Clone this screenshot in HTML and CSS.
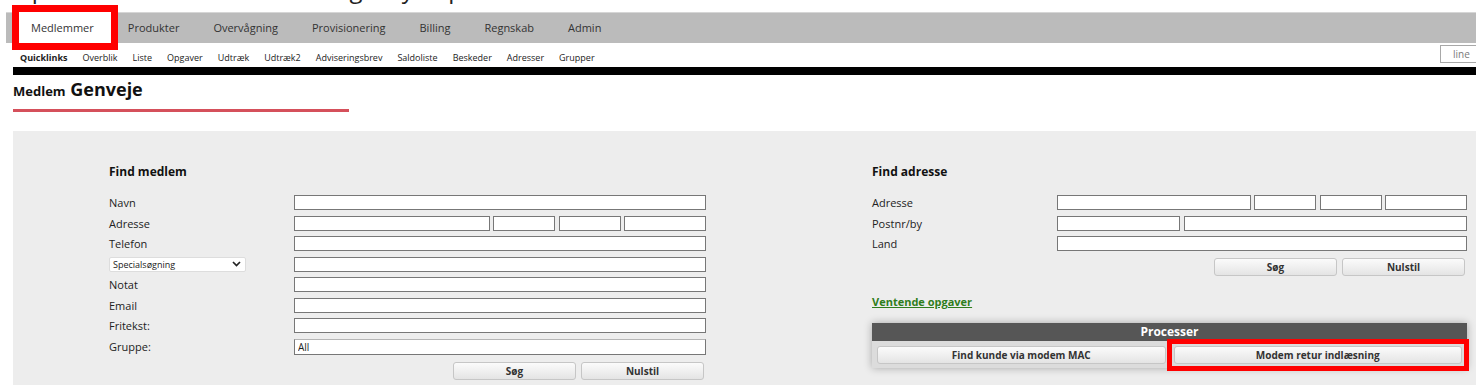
FILE: index.html
```html
<!DOCTYPE html>
<html lang="da">
<head>
    <meta charset="UTF-8">
    <meta name="viewport" content="width=device-width, initial-scale=1.0">
    <link rel="stylesheet" href="styles.css">
    <title>Medlem Genveje</title>
</head>
<body>
    <div class="doc-title">
        <h1>Opret modem retur indlæsning – ny import</h1>
    </div>

    <nav class="mainnav">
        <a class="active" href="#">Medlemmer</a>
        <a href="#">Produkter</a>
        <a href="#">Overvågning</a>
        <a href="#">Provisionering</a>
        <a href="#">Billing</a>
        <a href="#">Regnskab</a>
        <a href="#">Admin</a>
    </nav>

    <div class="subnav">
        <a href="#"><b>Quicklinks</b></a>
        <a href="#">Overblik</a>
        <a href="#">Liste</a>
        <a href="#">Opgaver</a>
        <a href="#">Udtræk</a>
        <a href="#">Udtræk2</a>
        <a href="#">Adviseringsbrev</a>
        <a href="#">Saldoliste</a>
        <a href="#">Beskeder</a>
        <a href="#">Adresser</a>
        <a href="#">Grupper</a>
        <span class="line-toggle">line</span>
    </div>
    <div class="blackbar"></div>

    <h2 class="pagehead"><small>Medlem</small> Genveje</h2>

    <div class="panel">
        <!-- venstre kolonne: find medlem -->
        <div class="col col-left">
            <h3>Find medlem</h3>
            <div class="fields">
                <label>Navn</label>
                <input class="txt" type="text">

                <label>Adresse</label>
                <div class="split">
                    <input class="txt" type="text">
                    <input class="txt short" type="text">
                    <input class="txt short" type="text">
                    <input class="txt medium" type="text">
                </div>

                <label>Telefon</label>
                <input class="txt" type="text">

                <div class="special">
                    <span>Specialsøgning</span>
                    <svg width="9" height="6" viewBox="0 0 9 6"><path d="M1 1 L4.5 4.5 L8 1" fill="none" stroke="#222" stroke-width="1.7"/></svg>
                </div>
                <input class="txt" type="text">

                <label>Notat</label>
                <input class="txt" type="text">

                <label>Email</label>
                <input class="txt" type="text">

                <label>Fritekst:</label>
                <input class="txt" type="text">

                <label>Gruppe:</label>
                <input class="txt group" type="text" value="All">
            </div>
            <div class="actions actions-left">
                <button class="btn">Søg</button>
                <button class="btn">Nulstil</button>
            </div>
        </div>

        <!-- højre kolonne: find adresse + processer -->
        <div class="col col-right">
            <h3>Find adresse</h3>
            <div class="fields">
                <label>Adresse</label>
                <div class="split">
                    <input class="txt" type="text">
                    <input class="txt short" type="text">
                    <input class="txt short" type="text">
                    <input class="txt medium" type="text">
                </div>

                <label>Postnr/by</label>
                <div class="split">
                    <input class="txt zip" type="text">
                    <input class="txt" type="text">
                </div>

                <label>Land</label>
                <input class="txt" type="text">
            </div>
            <div class="actions">
                <button class="btn">Søg</button>
                <button class="btn">Nulstil</button>
            </div>

            <div class="pending"><a href="#">Ventende opgaver</a></div>

            <div class="processes">
                <h4>Processer</h4>
                <div class="process-row">
                    <div class="process-cell"><button class="btn">Find kunde via modem MAC</button></div>
                    <div class="process-cell flagged"><button class="btn">Modem retur indlæsning</button></div>
                </div>
            </div>
        </div>
    </div>
</body>
</html>
```

FILE: styles.css
```css
body {
    margin: 0;
    font-family: "Open Sans", "Liberation Sans", Arial, sans-serif;
    color: #222;
    background-color: #fff;
    overflow: hidden;
}
a {
    color: #222;
    text-decoration: none;
}

/* afskåret overskrift i toppen */
.doc-title {
    height: 12px;
    overflow: hidden;
    padding-left: 13px;
}
.doc-title h1 {
    margin: -23px 0 0;
    font-size: 24px;
    font-weight: normal;
    line-height: 24px;
    white-space: nowrap;
}

/* hovedmenu */
.mainnav {
    display: flex;
    height: 31px;
    margin-left: 6px;
    padding-left: 13px;
    background: linear-gradient(#d6d6d6 0, #d6d6d6 1px, #bbb 1px);
}
.mainnav a {
    padding: 0 17px;
    font-size: 11px;
    line-height: 31px;
    color: #333;
}
.mainnav a.active {
    background-color: #fff;
    padding-left: 12px;
    outline: 7px solid #f00;
}

/* undermenu */
.subnav {
    display: flex;
    align-items: flex-end;
    gap: 15px;
    height: 24px;
    box-sizing: border-box;
    padding: 0 0 3px 20px;
    font-size: 9px;
    line-height: 12px;
    overflow: hidden;
}
.line-toggle {
    align-self: flex-start;
    margin: 2px -8px 0 auto;
    width: 44px;
    height: 18px;
    box-sizing: border-box;
    border: 1px solid #a8a8a8;
    padding-left: 12px;
    font-size: 10px;
    line-height: 16px;
    color: #7a7a7a;
}
.blackbar {
    height: 8px;
    margin-left: 13px;
    background-color: #000;
}

/* sidetitel */
.pagehead {
    width: 336px;
    margin: 0 0 19px 13px;
    padding: 2px 0 6px;
    border-bottom: 3px solid #d5505b;
    font-size: 18px;
    line-height: 24px;
    font-weight: bold;
    color: #111;
}
.pagehead small {
    font-size: 13px;
}

/* grå søgeflade */
.panel {
    display: flex;
    gap: 166px;
    margin-left: 13px;
    padding: 33px 9px 60px 96px;
    background-color: #ededed;
}
.col-left {
    width: 597px;
}
.col-right {
    width: 595px;
}
.col h3 {
    margin: 0 0 15px;
    font-size: 12px;
    line-height: 16px;
    color: #111;
}
.fields {
    display: grid;
    grid-template-columns: 185px 1fr;
    grid-auto-rows: 15px;
    row-gap: 5.5px;
}
.fields label {
    font-size: 11px;
    line-height: 15px;
}
.txt {
    display: block;
    width: 100%;
    height: 15px;
    margin: 0;
    box-sizing: border-box;
    padding: 0 3px;
    border: 1px solid #777;
    background-color: #fff;
    font-family: inherit;
    font-size: 10px;
    color: #222;
}
.txt.group {
    height: 16px;
    border-top-color: #b5b5b5;
}
.split {
    display: flex;
    gap: 3.5px;
}
.split .txt {
    flex: 1;
}
.split .short {
    flex: none;
    width: 62px;
}
.split .medium {
    flex: none;
    width: 82px;
}
.split .zip {
    flex: none;
    width: 123px;
}
.special {
    display: flex;
    align-items: center;
    justify-content: space-between;
    width: 137px;
    height: 15px;
    box-sizing: border-box;
    padding: 0 4px 0 3px;
    border: 1px solid #ddd;
    border-radius: 2px;
    background-color: #fff;
    font-size: 9px;
}

.actions {
    display: flex;
    justify-content: flex-end;
    gap: 5px;
    margin-top: 7px;
    padding-right: 2px;
}
.actions-left {
    margin-top: 8px;
}
.btn {
    width: 123px;
    height: 18px;
    padding: 0;
    border: 1px solid #c6c6c6;
    border-radius: 3px;
    background: linear-gradient(#fbfbfb, #e4e4e4);
    font-family: inherit;
    font-size: 10px;
    font-weight: bold;
    color: #333;
}

.pending {
    margin-top: 18px;
    font-size: 11px;
    line-height: 15px;
    font-weight: bold;
}
.pending a {
    color: #2f7d1c;
    text-decoration: underline;
}

/* processer-boks */
.processes {
    margin-top: 14px;
    background-color: #dcdcdc;
    box-shadow: 0 0 8px rgba(0, 0, 0, 0.3);
}
.processes h4 {
    margin: 0;
    background-color: #565656;
    color: #fff;
    font-size: 12px;
    line-height: 18px;
    text-align: center;
}
.process-row {
    display: flex;
    gap: 8px;
    padding: 5px 5px 4px;
}
.process-cell {
    flex: 1;
}
.process-cell .btn {
    display: block;
    width: 100%;
}
.process-cell.flagged {
    outline: 5px solid #f00;
    outline-offset: 2px;
}
```
